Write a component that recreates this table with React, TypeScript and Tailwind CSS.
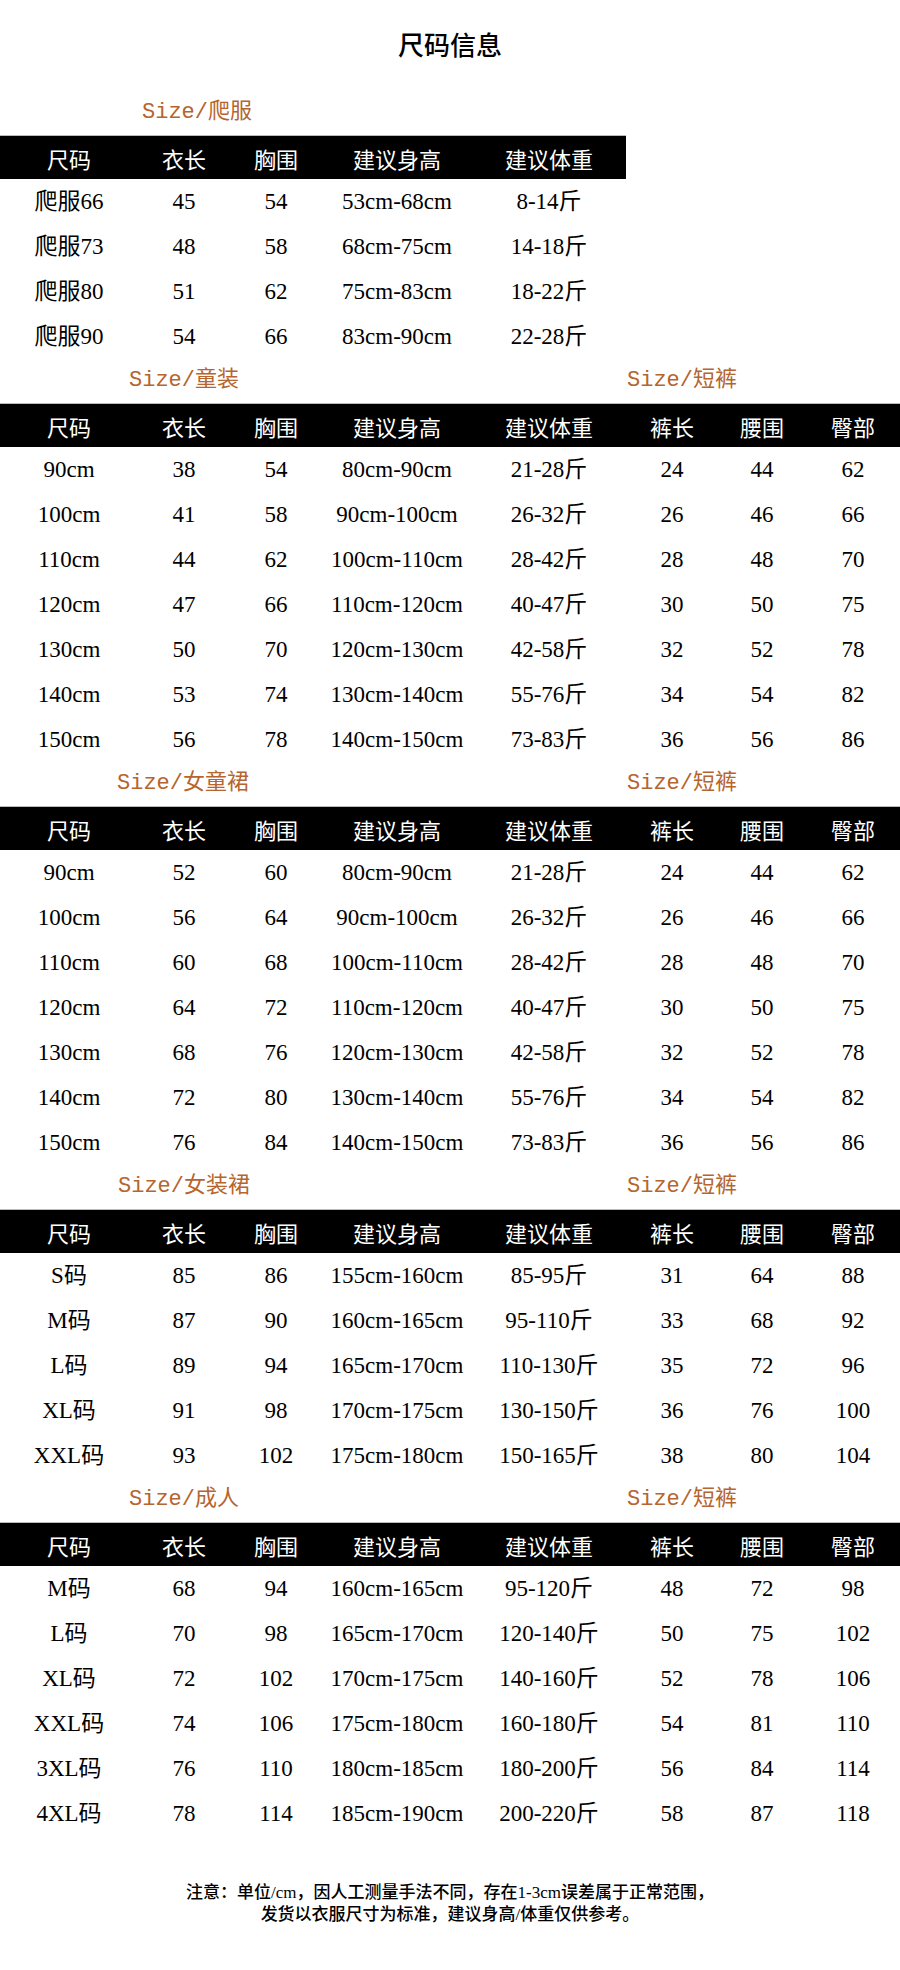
// Size chart page - 尺码信息
const HEAD_FULL = ["尺码", "衣长", "胸围", "建议身高", "建议体重", "裤长", "腰围", "臀部"];

type Section = {
  left: string;
  leftPad: string;
  right?: string;
  rows: string[][];
};

const sections: Section[] = [
  {
    left: "爬服",
    leftPad: "pl-[142px]",
    rows: [
      ["爬服66", "45", "54", "53cm-68cm", "8-14斤"],
      ["爬服73", "48", "58", "68cm-75cm", "14-18斤"],
      ["爬服80", "51", "62", "75cm-83cm", "18-22斤"],
      ["爬服90", "54", "66", "83cm-90cm", "22-28斤"],
    ],
  },
  {
    left: "童装",
    leftPad: "pl-[129px]",
    right: "短裤",
    rows: [
      ["90cm", "38", "54", "80cm-90cm", "21-28斤", "24", "44", "62"],
      ["100cm", "41", "58", "90cm-100cm", "26-32斤", "26", "46", "66"],
      ["110cm", "44", "62", "100cm-110cm", "28-42斤", "28", "48", "70"],
      ["120cm", "47", "66", "110cm-120cm", "40-47斤", "30", "50", "75"],
      ["130cm", "50", "70", "120cm-130cm", "42-58斤", "32", "52", "78"],
      ["140cm", "53", "74", "130cm-140cm", "55-76斤", "34", "54", "82"],
      ["150cm", "56", "78", "140cm-150cm", "73-83斤", "36", "56", "86"],
    ],
  },
  {
    left: "女童裙",
    leftPad: "pl-[117px]",
    right: "短裤",
    rows: [
      ["90cm", "52", "60", "80cm-90cm", "21-28斤", "24", "44", "62"],
      ["100cm", "56", "64", "90cm-100cm", "26-32斤", "26", "46", "66"],
      ["110cm", "60", "68", "100cm-110cm", "28-42斤", "28", "48", "70"],
      ["120cm", "64", "72", "110cm-120cm", "40-47斤", "30", "50", "75"],
      ["130cm", "68", "76", "120cm-130cm", "42-58斤", "32", "52", "78"],
      ["140cm", "72", "80", "130cm-140cm", "55-76斤", "34", "54", "82"],
      ["150cm", "76", "84", "140cm-150cm", "73-83斤", "36", "56", "86"],
    ],
  },
  {
    left: "女装裙",
    leftPad: "pl-[118px]",
    right: "短裤",
    rows: [
      ["S码", "85", "86", "155cm-160cm", "85-95斤", "31", "64", "88"],
      ["M码", "87", "90", "160cm-165cm", "95-110斤", "33", "68", "92"],
      ["L码", "89", "94", "165cm-170cm", "110-130斤", "35", "72", "96"],
      ["XL码", "91", "98", "170cm-175cm", "130-150斤", "36", "76", "100"],
      ["XXL码", "93", "102", "175cm-180cm", "150-165斤", "38", "80", "104"],
    ],
  },
  {
    left: "成人",
    leftPad: "pl-[129px]",
    right: "短裤",
    rows: [
      ["M码", "68", "94", "160cm-165cm", "95-120斤", "48", "72", "98"],
      ["L码", "70", "98", "165cm-170cm", "120-140斤", "50", "75", "102"],
      ["XL码", "72", "102", "170cm-175cm", "140-160斤", "52", "78", "106"],
      ["XXL码", "74", "106", "175cm-180cm", "160-180斤", "54", "81", "110"],
      ["3XL码", "76", "110", "180cm-185cm", "180-200斤", "56", "84", "114"],
      ["4XL码", "78", "114", "185cm-190cm", "200-220斤", "58", "87", "118"],
    ],
  },
];

const LABEL_FONT = "font-['Liberation_Mono','Noto_Sans_CJK_SC',monospace]";
const DATA_FONT = "font-['Liberation_Serif','Noto_Sans_CJK_SC',serif]";
const CJK_FONT = "font-['Noto_Sans_CJK_SC',sans-serif]";

function SizeTable({ section }: { section: Section }) {
  const full = !!section.right;
  const cols = full
    ? "grid-cols-[138px_92px_92px_150px_154px_92px_88px_94px] w-[900px]"
    : "grid-cols-[138px_92px_92px_150px_154px] w-[626px]";
  const heads = full ? HEAD_FULL : HEAD_FULL.slice(0, 5);

  return (
    <div>
      {/* Section labels */}
      <div className={`flex h-[44px] items-center text-[22px] leading-none text-[#b5652d] ${LABEL_FONT}`}>
        <div className={`w-[627px] ${section.leftPad}`}>Size/{section.left}</div>
        {section.right && <div>Size/{section.right}</div>}
      </div>

      {/* Black header bar */}
      <div className={`grid h-[44px] bg-black text-white border-t border-[#bbbbbb] ${cols} ${CJK_FONT}`}>
        {heads.map((h) => (
          <div key={h} className="flex items-center justify-center text-[22px] leading-none">
            {h}
          </div>
        ))}
      </div>

      {/* Data rows */}
      {section.rows.map((row, i) => (
        <div key={i} className={`grid h-[45px] ${cols} ${DATA_FONT}`}>
          {row.map((cell, j) => (
            <div key={j} className="flex items-center justify-center text-[23px] leading-none text-black whitespace-nowrap">
              {cell}
            </div>
          ))}
        </div>
      ))}
    </div>
  );
}

export default function App() {
  return (
    <div className="w-[900px] min-h-[1970px] bg-white">
      {/* Title */}
      <div className={`flex h-[91px] items-center justify-center pb-[4px] text-[26px] font-medium text-black ${CJK_FONT}`}>
        尺码信息
      </div>

      {sections.map((s) => (
        <SizeTable key={s.left} section={s} />
      ))}

      {/* Footer note */}
      <div className={`pt-[46px] text-center text-[17px] leading-[22px] font-medium text-black ${DATA_FONT}`}>
        <p>注意：单位/cm，因人工测量手法不同，存在1-3cm误差属于正常范围，</p>
        <p>发货以衣服尺寸为标准，建议身高/体重仅供参考。</p>
      </div>
    </div>
  );
}
